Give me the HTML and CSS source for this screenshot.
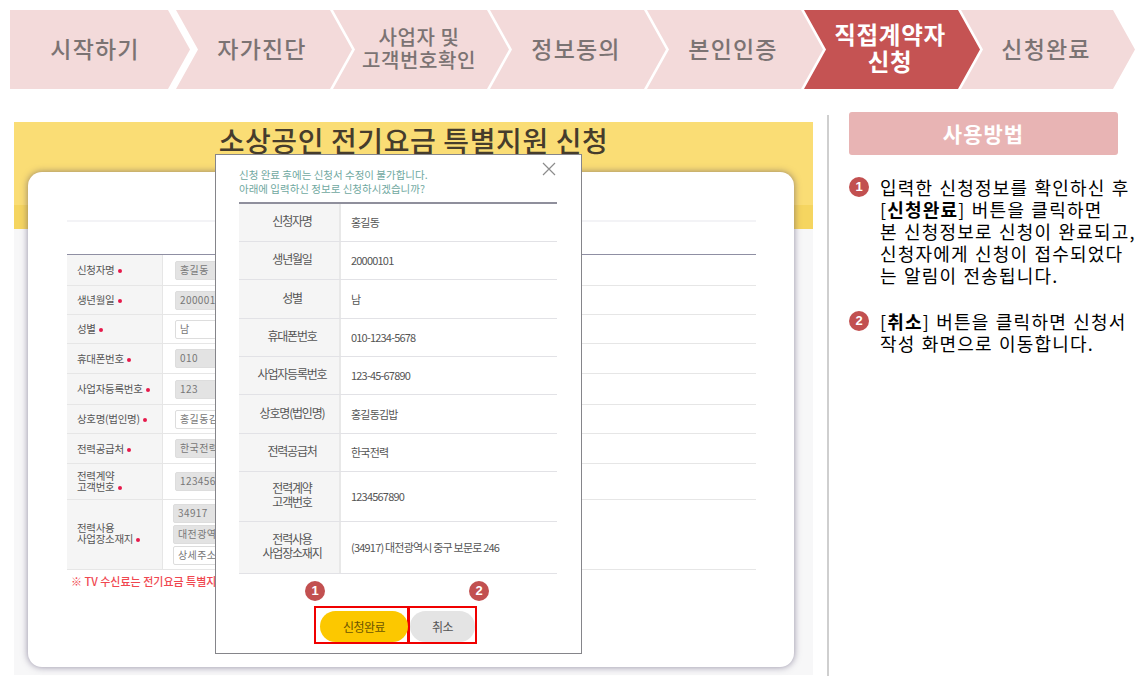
FILE: index.html
```html
<!DOCTYPE HTML>
<html>
<head>
    <title>소상공인 전기요금 특별지원 신청</title>
    <link rel="stylesheet" href="styles.css">
</head>
<body>
    <div class="stepper">
        <div class="step first">시작하기</div>
        <div class="step">자가진단</div>
        <div class="step small">사업자 및<br>고객번호확인</div>
        <div class="step">정보동의</div>
        <div class="step">본인인증</div>
        <div class="step active">직접계약자<br>신청</div>
        <div class="step last">신청완료</div>
    </div>

    <div class="content">
        <div class="screen">
            <h1 class="title">소상공인 전기요금 특별지원 신청</h1>
            <div class="card">
                <div class="card-rule"></div>
                <div class="form">
                    <div class="form-row h31"><div class="form-label">신청자명 <i></i></div><div class="form-value"><span class="field off">홍길동</span></div></div>
                    <div class="form-row h29"><div class="form-label">생년월일 <i></i></div><div class="form-value"><span class="field off">20000101</span></div></div>
                    <div class="form-row h29"><div class="form-label">성별 <i></i></div><div class="form-value"><span class="field">남</span></div></div>
                    <div class="form-row h30"><div class="form-label">휴대폰번호 <i></i></div><div class="form-value"><span class="field off">010</span></div></div>
                    <div class="form-row h31"><div class="form-label">사업자등록번호 <i></i></div><div class="form-value"><span class="field off">123</span></div></div>
                    <div class="form-row h29"><div class="form-label">상호명(법인명) <i></i></div><div class="form-value"><span class="field">홍길동김밥</span></div></div>
                    <div class="form-row h30"><div class="form-label">전력공급처 <i></i></div><div class="form-value"><span class="field off">한국전력</span></div></div>
                    <div class="form-row h36"><div class="form-label">전력계약<br>고객번호 <i></i></div><div class="form-value"><span class="field off">1234567890</span></div></div>
                    <div class="form-row h70"><div class="form-label">전력사용<br>사업장소재지 <i></i></div>
                        <div class="form-value stack">
                            <span class="field off">34917</span>
                            <span class="field off">대전광역시 중구 보문로 246</span>
                            <span class="field">상세주소</span>
                        </div>
                    </div>
                </div>
                <p class="note">※ TV 수신료는 전기요금 특별지원 대상에서 제외됩니다.</p>
            </div>

            <div class="modal">
                <div class="modal-close">
                    <svg width="14" height="14" viewBox="0 0 14 14"><path d="M1 1L13 13M13 1L1 13" stroke="#8c8c8c" stroke-width="1.2" fill="none"/></svg>
                </div>
                <p class="modal-text">신청 완료 후에는 신청서 수정이 불가합니다.<br>아래에 입력하신 정보로 신청하시겠습니까?</p>
                <div class="info">
                    <div class="info-row h38"><div class="info-label">신청자명</div><div class="info-value">홍길동</div></div>
                    <div class="info-row h38"><div class="info-label">생년월일</div><div class="info-value">20000101</div></div>
                    <div class="info-row h39"><div class="info-label">성별</div><div class="info-value">남</div></div>
                    <div class="info-row h38"><div class="info-label">휴대폰번호</div><div class="info-value">010-1234-5678</div></div>
                    <div class="info-row h38"><div class="info-label">사업자등록번호</div><div class="info-value">123-45-67890</div></div>
                    <div class="info-row h39"><div class="info-label">상호명(법인명)</div><div class="info-value">홍길동김밥</div></div>
                    <div class="info-row h38"><div class="info-label">전력공급처</div><div class="info-value">한국전력</div></div>
                    <div class="info-row h50"><div class="info-label">전력계약<br>고객번호</div><div class="info-value">1234567890</div></div>
                    <div class="info-row h52"><div class="info-label">전력사용<br>사업장소재지</div><div class="info-value">(34917) 대전광역시 중구 보문로 246</div></div>
                </div>
                <div class="actions">
                    <div class="action wide">
                        <span class="badge pin-left">1</span>
                        <div class="btn yellow">신청완료</div>
                    </div>
                    <div class="action narrow">
                        <span class="badge pin-right">2</span>
                        <div class="btn gray">취소</div>
                    </div>
                </div>
            </div>
        </div>

        <div class="side">
            <div class="side-head">사용방법</div>
            <div class="howto">
                <span class="badge">1</span>
                <p>입력한 신청정보를 확인하신 후<br>[<b>신청완료</b>] 버튼을 클릭하면<br>본 신청정보로 신청이 완료되고,<br>신청자에게 신청이 접수되었다<br>는 알림이 전송됩니다.</p>
            </div>
            <div class="howto">
                <span class="badge">2</span>
                <p>[<b>취소</b>] 버튼을 클릭하면 신청서<br>작성 화면으로 이동합니다.</p>
            </div>
        </div>
    </div>
</body>
</html>
```

FILE: styles.css
```css
body{
    margin: 0px;
    height: 676px;
    overflow: hidden;
    background-color: white;
    font-family: "Noto Sans CJK KR", "Noto Sans", sans-serif;
}

/* steps on top */
.stepper{
    display: flex;
    padding: 10px 0 0 10px;
    height: 79px;
}
.step{
    flex: none;
    width: 176px;
    height: 79px;
    margin-left: -19px;
    display: flex;
    align-items: center;
    justify-content: center;
    text-align: center;
    padding: 0 4px 2px 0;
    box-sizing: border-box;
    background-color: #f3dada;
    color: #7b7373;
    font-size: 23px;
    font-weight: 500;
    line-height: 25px;
    letter-spacing: 1.2px;
    clip-path: polygon(0 0, calc(100% - 22px) 0, 100% 50%, calc(100% - 22px) 100%, 0 100%, 22px 50%);
}
.step.first{
    width: 180px;
    margin-left: 0;
    margin-right: 5px;
    padding-right: 10px;
    clip-path: polygon(0 0, calc(100% - 22px) 0, 100% 50%, calc(100% - 22px) 100%, 0 100%);
}
.step.small{
    font-size: 20px;
    line-height: 23px;
    letter-spacing: 0.6px;
    padding-bottom: 4px;
}
.step.active{
    background-color: #c55353;
    color: white;
    font-weight: 700;
    font-size: 23.5px;
    line-height: 27px;
    letter-spacing: 0.7px;
    padding-bottom: 4px;
}
.step.last{
    width: 174px;
}

.content{
    display: flex;
    align-items: flex-start;
    padding-top: 26px;
}

/* left : captured form with popup */
.screen{
    position: relative;
    flex: none;
    width: 799px;
    height: 553px;
    margin: 7px 0 0 14px;
    background: linear-gradient(#fadd75 0 83px, #f5d560 83px 107px, #f7f7f8 107px);
}
.title{
    margin: 0;
    height: 50px;
    box-sizing: border-box;
    text-align: center;
    font-size: 28px;
    line-height: 36px;
    font-weight: 500;
    letter-spacing: 0.6px;
    color: #463c2c;
}
.card{
    margin-left: 14px;
    width: 766px;
    height: 495px;
    box-sizing: border-box;
    padding: 48px 38px 0 39px;
    background-color: white;
    border-radius: 14px;
    box-shadow: 0 0 7px rgba(60, 50, 90, 0.55);
}
.card-rule{
    height: 2px;
    background-color: #f3f3f6;
    margin-bottom: 32px;
}
.form{
    border-top: 1px solid #8f8fa3;
}
.form-row{
    display: flex;
    box-sizing: border-box;
    border-bottom: 1px solid #e6e6e6;
}
.form-label{
    flex: none;
    width: 96px;
    box-sizing: border-box;
    padding: 0 0 1px 10px;
    align-content: center;
    background-color: #f5f5f5;
    border-right: 1px solid #e6e6e6;
    font-size: 10.5px;
    line-height: 11px;
    color: #555;
    letter-spacing: -0.3px;
}
.form-label i{
    display: inline-block;
    width: 4px;
    height: 4px;
    margin-left: 1px;
    border-radius: 50%;
    background-color: #e6194b;
    vertical-align: 1px;
}
.h70 .form-label{ padding-bottom: 3px; }
.form-value{
    flex: 1;
    display: flex;
    align-items: center;
    padding-left: 12px;
}
.form-value.stack{
    flex-direction: column;
    align-items: flex-start;
    justify-content: center;
    gap: 2px;
    padding-left: 10px;
}
.field{
    width: 200px;
    height: 19px;
    box-sizing: border-box;
    padding-left: 4px;
    border: 1px solid #ddd;
    border-radius: 2px;
    background-color: white;
    font-size: 10px;
    line-height: 16px;
    color: #777;
    letter-spacing: 0.4px;
}
.field.off{
    background-color: #e3e3e3;
}
.h29{ height: 29px; }
.h30{ height: 30px; }
.h31{ height: 31px; }
.h36{ height: 36px; }
.h70{ height: 70px; }
.note{
    margin: 4px 0 0 4px;
    font-size: 11px;
    line-height: 14px;
    font-weight: 500;
    color: #f0474f;
}

/* popup */
.modal{
    position: absolute;
    left: 201px;
    top: 32px;
    width: 367px;
    height: 500px;
    box-sizing: border-box;
    padding: 13px 24px 0 23px;
    background-color: white;
    border: 1px solid #85858a;
}
.modal-close{
    position: absolute;
    right: 25px;
    top: 7px;
    line-height: 0;
}
.modal-text{
    margin: 0;
    height: 34px;
    font-size: 10.5px;
    line-height: 14px;
    color: #6fa8a0;
}
.info{
    border-top: 2px solid #8f8f9c;
}
.info-row{
    display: flex;
    box-sizing: border-box;
    border-bottom: 1px solid #e2e2e6;
    font-size: 11px;
    color: #555;
    letter-spacing: -0.8px;
}
.info-label{
    flex: none;
    width: 102px;
    box-sizing: border-box;
    padding: 0 0 3px 6px;
    display: flex;
    align-items: center;
    justify-content: center;
    text-align: center;
    background-color: #f5f5f5;
    border-right: 2px solid #e8e8e8;
    font-size: 12px;
    line-height: 14px;
    letter-spacing: -1.2px;
}
.info-value{
    flex: 1;
    display: flex;
    align-items: center;
    padding: 0 0 1px 10px;
}
.h38{ height: 38px; }
.h39{ height: 39px; }
.h50{ height: 50px; }
.h52{ height: 52px; }

.actions{
    display: flex;
    justify-content: flex-start;
    margin: 32px 0 0 75px;
}
.action{
    position: relative;
    height: 38px;
    box-sizing: border-box;
    border: 2px solid #f00000;
    display: flex;
    align-items: flex-end;
}
.action.wide{
    width: 95px;
    padding: 0 0 0 4px;
}
.action.narrow{
    width: 69px;
    margin-left: -1px;
    justify-content: center;
}
.btn{
    height: 31px;
    border-radius: 16px;
    display: flex;
    align-items: center;
    justify-content: center;
    font-size: 12px;
    letter-spacing: -0.5px;
}
.btn.yellow{
    flex: none;
    width: 88px;
    background-color: #fcc800;
    color: #6b5500;
}
.btn.gray{
    flex: none;
    width: 65px;
    background-color: #e4e4e4;
    color: #555;
}

.badge{
    flex: none;
    width: 20px;
    height: 20px;
    border-radius: 50%;
    background-color: #c25050;
    color: white;
    font-family: "Liberation Sans", sans-serif;
    font-size: 13px;
    font-weight: 700;
    line-height: 20px;
    text-align: center;
}
.pin-left{
    position: absolute;
    left: -11px;
    top: -27px;
}
.pin-right{
    position: absolute;
    left: 59px;
    top: -27px;
}

/* right : how to use */
.side{
    flex: none;
    width: 306px;
    margin-left: 14px;
    height: 561px;
    box-sizing: border-box;
    border-left: 2px solid #cfcfcf;
    padding: 0 0 0 20px;
}
.side-head{
    width: 269px;
    height: 43px;
    margin-top: -3px;
    margin-bottom: 21px;
    border-radius: 3px;
    background-color: #e8b4b4;
    color: white;
    font-size: 21px;
    font-weight: 700;
    line-height: 43px;
    text-align: center;
    letter-spacing: 1px;
}
.howto{
    display: flex;
    gap: 11px;
    margin-bottom: 24px;
    width: 290px;
}
.howto .badge{
    margin-top: 1px;
}
.howto p{
    margin: 0;
    white-space: nowrap;
    font-size: 18px;
    line-height: 22px;
    letter-spacing: 1.2px;
    word-spacing: 1px;
    color: black;
}
```
